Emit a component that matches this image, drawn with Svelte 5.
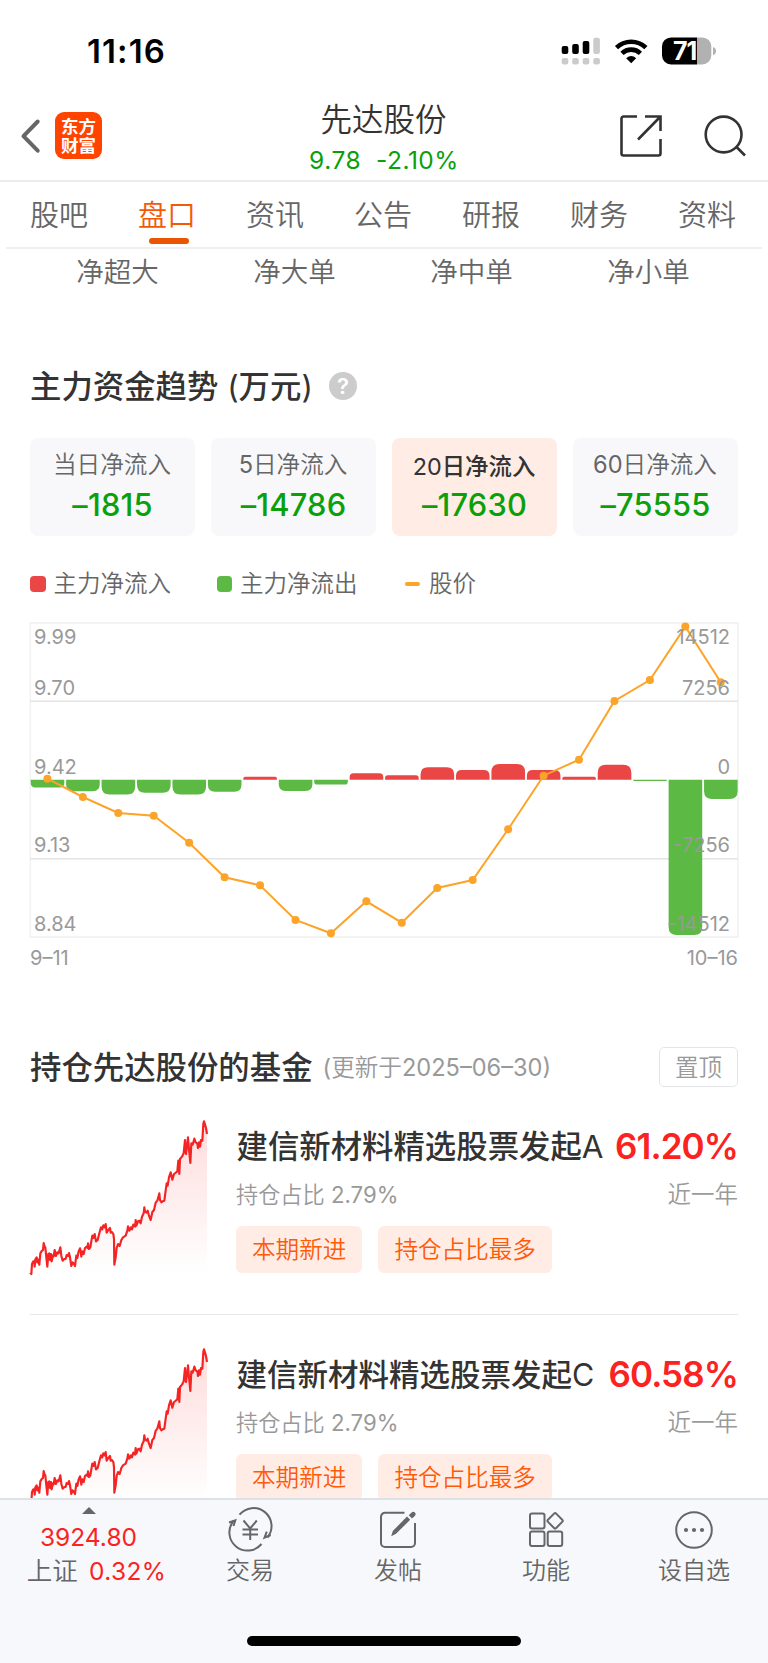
<script lang="ts">
  const tabs = ['股吧', '盘口', '资讯', '公告', '研报', '财务', '资料']
  const columns = ['净超大', '净大单', '净中单', '净小单']
  const periods = [
    { label: '当日净流入', value: '–1815' },
    { label: '5日净流入', value: '–14786' },
    { label: '20日净流入', value: '–17630' },
    { label: '60日净流入', value: '–75555' },
  ]
  let tab = $state('盘口')
  let period = $state(2)

  // bar heights in px, positive = inflow (up), negative = outflow (down)
  const flows = [-7.8, -11.6, -14.8, -13.1, -14.8, -12, 2.9, -11.2, -4.9, 6.4, 4.4, 12.4, 9.8, 15.8, 9.8, 2.9, 15, -1.3, -155.4, -19.4]
  const prices = [
    156.7, 175, 191, 193.7, 220.7, 255.3, 263.3, 298, 311.3, 279.3, 300.7, 266, 258, 207.3, 153.7, 137.7, 79, 58, 4.6, 60.3,
  ]
  const ZERO = 157.7
  const STEP = 35.44
  const px = (i: number) => 17.4 + i * STEP
  const line = prices.map((y, i) => `${px(i)},${y}`).join(' ')

  function bar(i: number, h: number) {
    const x = 0.7 + i * STEP
    const w = 33.6
    const r = Math.min(8, Math.abs(h) * 0.6)
    const s = h > 0 ? -1 : 1
    const end = ZERO + s * Math.abs(h)
    return `M${x} ${ZERO}V${end - s * r}Q${x} ${end} ${x + r} ${end}H${x + w - r}Q${x + w} ${end} ${x + w} ${end - s * r}V${ZERO}Z`
  }

  const axis = [
    { y: 15, left: '9.99', right: '14512' },
    { y: 66.3, left: '9.70', right: '7256' },
    { y: 144.7, left: '9.42', right: '0' },
    { y: 223.4, left: '9.13', right: '-7256' },
    { y: 302, left: '8.84', right: '-14512' },
  ]

  const spark =
    '30,487 34,490 36,460 40,452 43,455 44,468 46,446 50,440 52,455 55,447 58,462 61,428 66,420 69,418 71,397 74,408 76,410 79,440 82,468 85,430 88,428 90,448 93,430 95,452 99,434 101,437 104,418 108,436 112,425 116,428 121,410 124,435 128,450 132,446 137,444 140,433 144,436 147,427 150,440 154,466 158,455 162,460 165,466 169,435 172,442 176,422 180,413 182,422 184,438 187,422 191,430 195,412 200,408 203,412 204,398 207,415 211,410 214,392 217,375 220,382 224,370 228,392 233,388 238,368 243,350 247,356 250,344 254,350 257,340 260,366 265,358 270,352 272,366 276,364 280,370 282,385 283,462 287,440 290,412 294,400 299,406 304,388 309,380 317,375 322,360 324,347 328,360 333,350 336,356 340,342 345,348 347,328 349,345 354,332 358,330 362,338 366,318 371,308 373,290 375,302 380,306 383,300 387,315 392,328 397,304 402,298 407,276 412,270 418,248 420,268 424,275 428,272 433,270 437,240 440,218 443,225 447,200 452,185 457,207 462,190 466,187 472,182 475,150 478,190 480,145 486,138 491,128 495,88 498,130 501,108 504,80 507,115 511,157 514,98 518,102 523,84 527,95 532,98 534,112 537,95 540,108 543,88 547,90 550,40 552,32 555,42 558,52 561,70'

  const funds = [
    { name: '建信新材料精选股票发起A', rate: '61.20%', small: false },
    { name: '建信新材料精选股票发起C', rate: '60.58%', small: true },
  ]
</script>

<div class="screen">
  <div class="status">
    <span class="time">11:16</span>
    <svg class="status-icons" width="156" height="30" viewBox="561 36 156 30">
      <g fill="#000">
        <rect x="561.7" y="46" width="6.6" height="8" rx="2" />
        <rect x="572.2" y="44" width="6.6" height="10" rx="2" />
        <rect x="582.7" y="41" width="6.6" height="13" rx="2" />
      </g>
      <g fill="#cbcbcb">
        <rect x="593.3" y="37.7" width="6.6" height="16.3" rx="2" />
        <rect x="561.7" y="58" width="6.6" height="6.6" rx="2" />
        <rect x="572.2" y="58" width="6.6" height="6.6" rx="2" />
        <rect x="582.7" y="58" width="6.6" height="6.6" rx="2" />
        <rect x="593.3" y="58" width="6.6" height="6.6" rx="2" />
      </g>
      <g fill="none" stroke="#000" stroke-width="4.6">
        <path d="M616.5 47.6a21.3 21.3 0 0 1 29.4 0" />
        <path d="M622 53.4a13.2 13.2 0 0 1 18.4 0" />
      </g>
      <path d="M626.2 58.2q5-4.6 10 0L631.2 63.2z" fill="#000" />
      <path d="M671 37.4h26v27h-26a9 9 0 0 1-9-9v-9a9 9 0 0 1 9-9z" fill="#000" />
      <path d="M697 37.4h5.3a9 9 0 0 1 9 9v9a9 9 0 0 1-9 9H697z" fill="#b1b1b1" />
      <path d="M713 47c4 1.2 4 7 0 8.2z" fill="#b1b1b1" />
      <text x="673" y="60.1" class="battery">71</text>
    </svg>
  </div>

  <header class="nav">
    <div class="nav-left">
      <svg width="20" height="36" viewBox="0 0 20 36" fill="none" stroke="#666" stroke-width="4" stroke-linecap="round" stroke-linejoin="round">
        <path d="M17.7 3.5L3.5 18.2l14.2 14.5" />
      </svg>
      <span class="logo">东方财富</span>
    </div>
    <div class="stock">
      <div class="stock-name">先达股份</div>
      <div class="stock-price"><span>9.78</span><span>-2.10%</span></div>
    </div>
    <div class="nav-right">
      <svg width="42" height="42" viewBox="0 0 42 42" fill="none" stroke="#333" stroke-width="2.6">
        <path d="M17 1.5H3.5a2 2 0 0 0-2 2v35a2 2 0 0 0 2 2h35a2 2 0 0 0 2-2V24M25 1.5h15.5V16M40 2L18 24.5" />
      </svg>
      <svg width="42" height="42" viewBox="0 0 42 42" fill="none" stroke="#333" stroke-width="2.6">
        <circle cx="19.6" cy="19.5" r="17.9" />
        <path d="M32 31.5l9 9" />
      </svg>
    </div>
  </header>

  <nav class="tabs">
    {#each tabs as t}
      <button class:on={t === tab} onclick={() => (tab = t)}>{t}</button>
    {/each}
  </nav>

  <main>
    <div class="columns">
      {#each columns as c}<span>{c}</span>{/each}
    </div>

    <section class="trend">
      <h2>主力资金趋势 (万元) <span class="help">?</span></h2>
      <div class="periods">
        {#each periods as p, i}
          <button class:on={i === period} onclick={() => (period = i)}>
            <span class="label">{p.label}</span>
            <span class="value">{p.value}</span>
          </button>
        {/each}
      </div>
      <div class="legend">
        <span class="in">主力净流入</span>
        <span class="out">主力净流出</span>
        <span class="price">股价</span>
      </div>
      <svg class="chart" width="708" height="316" viewBox="0 0 708 316">
        <rect x="0.3" y="1" width="707.6" height="314" fill="none" stroke="#f1f1f1" stroke-width="1.6" />
        <path d="M0 79.2H708M0 236.7H708" stroke="#e4e4e4" stroke-width="1.4" />
        {#each flows as h, i}
          <path d={bar(i, h)} fill={h > 0 ? '#ea4646' : '#5bb944'} />
        {/each}
        <polyline points={line} fill="none" stroke="#fca429" stroke-width="2" />
        {#each prices as y, i}
          <circle cx={px(i)} cy={y} r="4" fill="#fca429" />
        {/each}
        {#each axis as a}
          <text x="4" y={a.y + 7}>{a.left}</text>
          <text x="700" y={a.y + 7} text-anchor="end">{a.right}</text>
        {/each}
      </svg>
      <div class="dates"><span>9–11</span><span>10–16</span></div>
    </section>

    <section class="funds">
      <div class="funds-head">
        <h2>持仓先达股份的基金</h2>
        <span class="updated">(更新于2025–06–30)</span>
        <button class="pin">置顶</button>
      </div>
      {#each funds as f, i}
        <article class="fund">
          <svg class="spark" width="177" height="156" viewBox="30 28 531 468">
            <defs>
              <linearGradient id="fade{i}" x1="0" y1="0" x2="0" y2="1">
                <stop offset="0" stop-color="#f72424" stop-opacity="0.16" />
                <stop offset="1" stop-color="#f72424" stop-opacity="0" />
              </linearGradient>
            </defs>
            <polygon points="{spark} 561,490 30,490" fill="url(#fade{i})" />
            <polyline points={spark} fill="none" stroke="#f52323" stroke-width="6.5" stroke-linejoin="round" />
          </svg>
          <div class="info">
            <div class="row top">
              <span class="name" class:small={f.small}>{f.name}</span>
              <span class="rate">{f.rate}</span>
            </div>
            <div class="row sub"><span>持仓占比 2.79%</span><span class="year">近一年</span></div>
            <div class="tags"><span>本期新进</span><span>持仓占比最多</span></div>
          </div>
        </article>
      {/each}
    </section>
  </main>

  <footer>
    <div class="bar">
      <div class="index">
        <i class="caret"></i>
        <div class="red">3924.80</div>
        <div class="market">上证 <span class="red">0.32%</span></div>
      </div>
      <div class="item">
        <svg width="44" height="40" viewBox="0 0 44 40" fill="none" stroke="#666" stroke-width="2">
          <path d="M11.5 4.7A18 18 0 0 1 39.5 27.5M33.5 34A18 18 0 0 1 5.5 11" />
          <path d="M1 12.5l6.3-2.2L5.5 16M42.7 25l-6.2 2.6 2.3-6" />
          <path d="M15.5 10.5l6.7 8 6.6-8M14.5 19.5h15.5M14.5 24.5h15.5M22.2 18.5V30" />
        </svg>
        <span>交易</span>
      </div>
      <div class="item">
        <svg width="44" height="40" viewBox="0 0 44 40" fill="none" stroke="#666" stroke-width="2">
          <path d="M28.5 2.8H9a4 4 0 0 0-4 4V33a4 4 0 0 0 4 4h26a4 4 0 0 0 4-4V13" />
          <path d="M15.2 26.2l1.6-5.2L31 6.6l3.2 3.2L20 23.8z" fill="#666" stroke="none" />
          <path d="M32.8 5.3l2.8-2.7a2.2 2.2 0 0 1 3.4 3.2L36 8.5z" fill="#666" stroke="none" />
        </svg>
        <span>发帖</span>
      </div>
      <div class="item">
        <svg width="44" height="40" viewBox="0 0 44 40" fill="none" stroke="#666" stroke-width="2" stroke-linejoin="round">
          <rect x="6" y="3.5" width="14.5" height="15" rx="2" />
          <rect x="6" y="21.5" width="14.5" height="14.5" rx="2" />
          <rect x="23.7" y="21.5" width="14.5" height="14.5" rx="2" />
          <rect x="25.3" y="5" width="11.6" height="11.6" rx="1.5" transform="rotate(45 31.1 10.8)" />
        </svg>
        <span>功能</span>
      </div>
      <div class="item">
        <svg width="44" height="40" viewBox="0 0 44 40">
          <circle cx="22" cy="20" r="17.8" fill="none" stroke="#666" stroke-width="2" />
          <g fill="#666"><circle cx="14" cy="20" r="2.1" /><circle cx="22" cy="20" r="2.1" /><circle cx="30" cy="20" r="2.1" /></g>
        </svg>
        <span>设自选</span>
      </div>
    </div>
    <div class="home"></div>
  </footer>
</div>

<style>
  :global(body) {
    background: #fff;
  }
  .screen {
    width: 768px;
    height: 1663px;
    display: flex;
    flex-direction: column;
    overflow: hidden;
    background: #fff;
    color: #666;
    font-family: Inter, 'Noto Sans CJK SC DemiLight', 'Noto Sans CJK SC', sans-serif;
  }
  button {
    padding: 0;
    border: 0;
    background: none;
    font: inherit;
    color: inherit;
  }
  h2,
  .name {
    font-family: Inter, 'Noto Sans CJK SC Medium', 'Noto Sans CJK SC', sans-serif;
    color: #333;
  }
  h2 {
    margin: 0;
    font-size: 31.4px;
    font-weight: 400;
    line-height: 42px;
  }
  svg {
    display: block;
    flex: none;
    overflow: visible;
  }

  .status {
    height: 96px;
    flex: none;
    display: flex;
    justify-content: space-between;
    padding: 0 51px 0 87px;
    box-sizing: border-box;
  }
  .time {
    margin-top: 31px;
    font-size: 33px;
    font-weight: 600;
    line-height: 40px;
    letter-spacing: 1.1px;
    color: #000;
  }
  .status-icons {
    margin-top: 36px;
  }
  .battery {
    font-size: 25px;
    font-weight: 700;
    letter-spacing: -1px;
    fill: #fff;
  }

  .nav {
    height: 86px;
    display: grid;
    grid-template-columns: 1fr auto 1fr;
    border-bottom: 2px solid #ececec;
    box-sizing: border-box;
    flex: none;
  }
  .nav-left {
    display: flex;
    align-items: flex-start;
    gap: 14px;
    padding: 16px 0 0 20px;
  }
  .nav-left svg {
    margin-top: 6px;
    margin-right: 1px;
  }
  .logo {
    width: 47px;
    height: 47px;
    padding: 4px 5.5px 0;
    box-sizing: border-box;
    border-radius: 9px;
    background: #ff4400;
    color: #fff;
    font-family: 'Noto Sans CJK SC', sans-serif;
    font-size: 17.5px;
    font-weight: 700;
    line-height: 19px;
    text-align: center;
  }
  .stock {
    text-align: center;
  }
  .stock-name {
    margin-top: 5px;
    margin-right: 1px;
    font-size: 31.5px;
    line-height: 38px;
    color: #333;
  }
  .stock-price {
    display: flex;
    justify-content: center;
    gap: 15px;
    margin-top: 6px;
    font-size: 24.5px;
    letter-spacing: 0.5px;
    line-height: 30px;
    color: #0aa00a;
  }
  .nav-right {
    display: flex;
    justify-content: flex-end;
    gap: 42px;
    padding: 19px 22px 0 0;
  }

  .tabs {
    height: 67px;
    display: flex;
    justify-content: space-between;
    flex: none;
    margin: 0 6px;
    padding: 0 25px 0 23px;
    border-bottom: 2px solid #f0f0f0;
    box-sizing: border-box;
  }
  .tabs button {
    position: relative;
    width: 60px;
    height: 66px;
    font-size: 29px;
    line-height: 68px;
  }
  .tabs .on {
    color: #f25a0a;
  }
  .tabs .on::after {
    content: '';
    position: absolute;
    left: 11.5px;
    bottom: 4px;
    width: 40px;
    height: 6px;
    border-radius: 3px;
    background: #ea5504;
  }

  main {
    height: 1249px;
    flex: none;
    padding: 0 30px;
    overflow: hidden;
  }
  .columns {
    display: grid;
    grid-template-columns: repeat(4, 177px);
    margin: 4px 0 0 -1px;
    height: 39px;
    line-height: 39px;
    font-size: 27.5px;
    text-align: center;
  }
  .trend h2 {
    display: flex;
    align-items: center;
    gap: 16px;
    margin-top: 74px;
    height: 42px;
  }
  .help {
    width: 28px;
    height: 28px;
    margin-top: -2px;
    border-radius: 50%;
    background: #ccc;
    color: #fff;
    font-size: 22px;
    font-weight: 600;
    line-height: 28px;
    text-align: center;
  }
  .periods {
    display: grid;
    grid-template-columns: repeat(4, 165px);
    gap: 16px;
    margin-top: 30px;
  }
  .periods button {
    height: 98px;
    display: flex;
    flex-direction: column;
    align-items: center;
    border-radius: 8px;
    background: #f8f8fb;
  }
  .periods .label {
    margin-top: 12px;
    margin-right: 1px;
    font-size: 23.6px;
    line-height: 30px;
  }
  .periods .value {
    margin-top: 6px;
    font-size: 30.8px;
    line-height: 37px;
    font-weight: 500;
    letter-spacing: 0.2px;
    color: #0aa00a;
  }
  .periods .on {
    background: #ffede5;
  }
  .periods .on .label {
    margin-top: 14px;
    margin-bottom: -2px;
    font-family: Inter, 'Noto Sans CJK SC Medium', 'Noto Sans CJK SC', sans-serif;
    font-size: 23.4px;
    color: #333;
  }
  .legend {
    display: flex;
    margin-top: 33px;
    font-size: 23.5px;
    line-height: 30px;
  }
  .legend span {
    display: flex;
    align-items: center;
    gap: 8px;
  }
  .legend span::before {
    content: '';
    width: 15.5px;
    height: 16px;
    border-radius: 4px;
    background: #ea4646;
  }
  .legend .out {
    margin-left: 45.5px;
  }
  .legend .out::before {
    background: #5bb944;
  }
  .legend .price {
    margin-left: 47px;
    gap: 9px;
  }
  .legend .price::before {
    height: 4.5px;
    border-radius: 2px;
    background: #fca429;
  }
  .chart {
    margin-top: 23px;
  }
  .chart text {
    font-size: 20px;
    fill: #999;
  }
  .dates {
    display: flex;
    justify-content: space-between;
    margin-top: 8px;
    font-size: 20px;
    line-height: 24px;
    color: #999;
  }

  .funds-head {
    display: flex;
    align-items: center;
    height: 40px;
    margin-top: 77px;
  }
  .funds-head h2 {
    margin-top: 1px;
  }
  .updated {
    margin-left: 10px;
    margin-top: 2px;
    font-size: 23.6px;
    line-height: 30px;
    color: #999;
  }
  .pin {
    width: 79px;
    height: 40px;
    margin-left: auto;
    border: 1.5px solid #e3e5e9;
    border-radius: 5px;
    font-size: 23.5px;
    line-height: 37px;
    color: #999;
  }
  .fund {
    display: flex;
    gap: 29px;
    height: 228.5px;
    box-sizing: border-box;
    padding-top: 32px;
    border-bottom: 1.5px solid #e8e8e8;
  }
  .fund:first-of-type {
    height: 228px;
  }
  .spark {
    margin-top: 0.7px;
  }
  .info {
    flex: 1;
    padding-top: 6px;
  }
  .row {
    display: flex;
    justify-content: space-between;
    align-items: center;
    white-space: nowrap;
  }
  .top {
    height: 44px;
    line-height: 44px;
  }
  .name {
    margin-left: 0.5px;
    font-size: 31.4px;
  }
  .name.small {
    font-size: 30.5px;
  }
  .rate {
    margin-top: -2px;
    font-size: 35px;
    font-weight: 600;
    letter-spacing: -0.9px;
    color: #fb2222;
  }
  .sub {
    height: 28px;
    margin-top: 12px;
    font-size: 22.2px;
    line-height: 28px;
    color: #999;
  }
  .year {
    font-size: 23.5px;
  }
  .tags {
    display: flex;
    gap: 16px;
    margin-top: 16.5px;
  }
  .tags span {
    height: 47px;
    padding: 0 16px;
    border-radius: 6px;
    background: #ffede5;
    color: #ff5a0a;
    font-size: 23.6px;
    line-height: 48px;
  }

  footer {
    flex: 1;
    border-top: 2px solid #dde2e6;
    background: #f7f8fb;
  }
  .bar {
    display: grid;
    grid-template-columns: 176px repeat(4, 148px);
    height: 136px;
  }
  .index {
    display: flex;
    flex-direction: column;
    align-items: center;
    padding-left: 1px;
    font-size: 25.5px;
    line-height: 34px;
    box-sizing: border-box;
    white-space: nowrap;
  }
  .index .red {
    font-size: 24.5px;
    color: #fb2222;
  }
  .caret {
    margin: 7px 0 6px;
    border: 7px solid transparent;
    border-top: 0;
    border-bottom: 7px solid #666;
  }
  .market {
    padding-left: 16px;
  }
  .market .red {
    margin-left: 4px;
    letter-spacing: 0.4px;
  }
  .item {
    display: flex;
    flex-direction: column;
    align-items: center;
    padding-top: 10px;
    font-size: 24px;
    line-height: 41px;
  }
  .home {
    width: 274px;
    height: 10px;
    margin: 0 auto;
    border-radius: 5px;
    background: #000;
  }
</style>
